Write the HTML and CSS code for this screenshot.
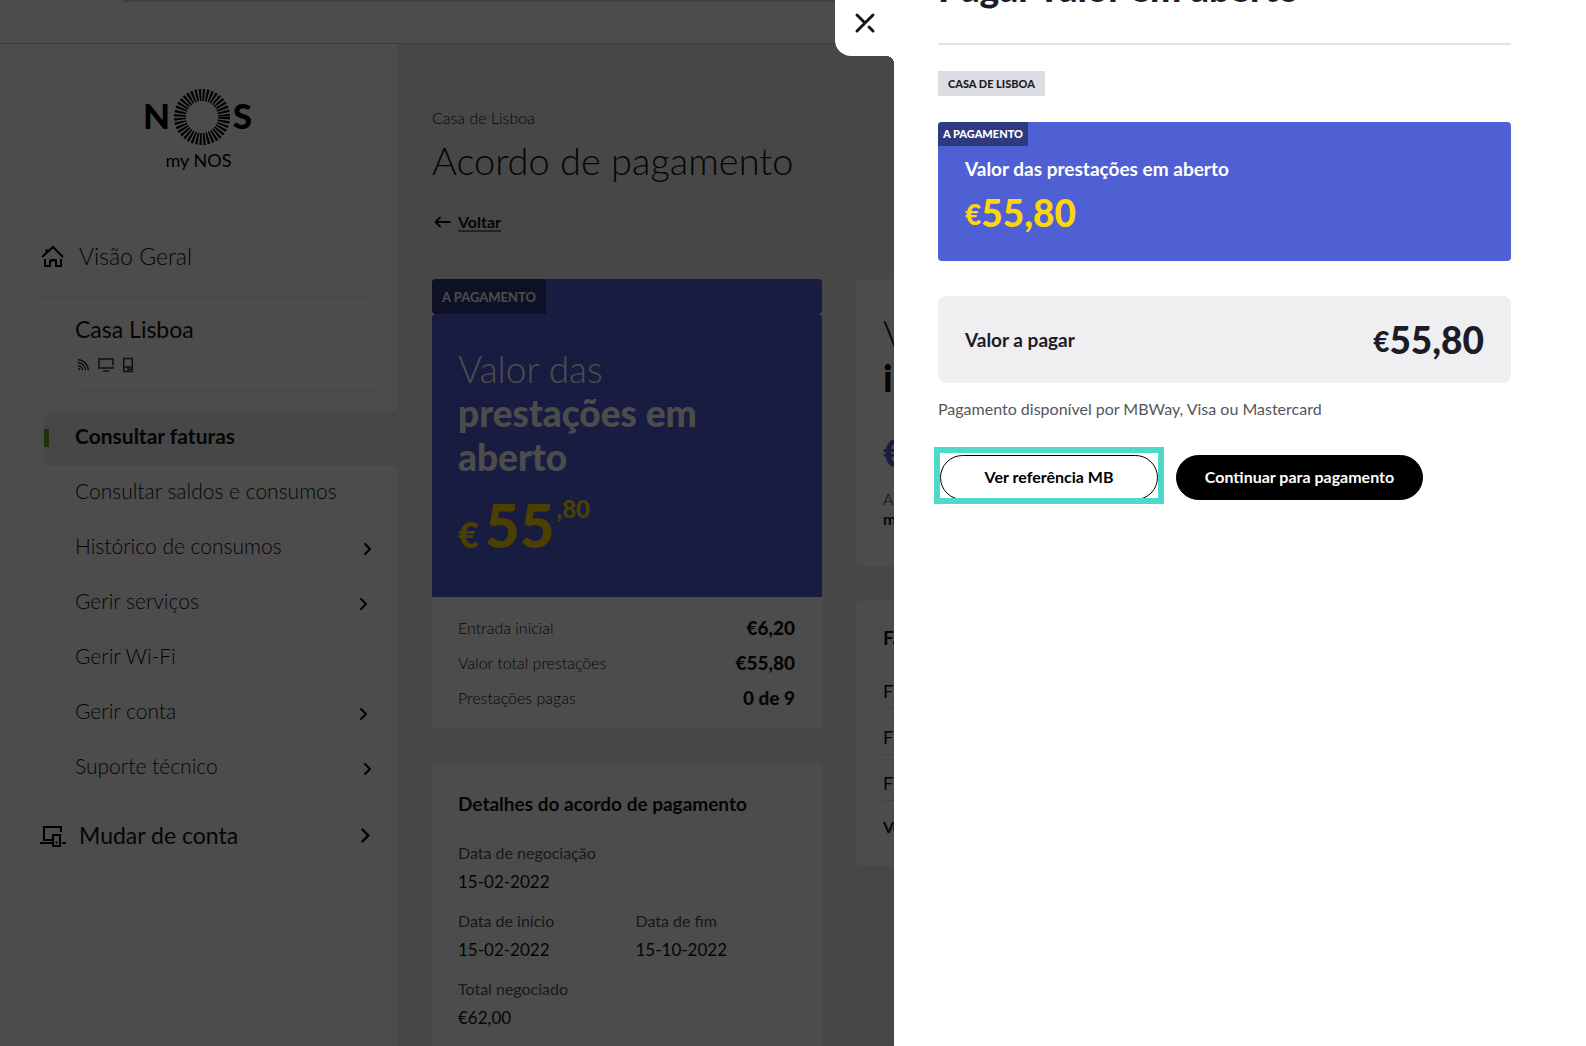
FILE: index.html
```html
<!DOCTYPE html>
<html lang="pt">
<head>
  <meta charset="UTF-8">
  <meta name="viewport" content="width=device-width, initial-scale=1">
  <title>my NOS - Acordo de pagamento</title>
  <link rel="stylesheet" href="styles.css">
</head>
<body>

<svg class="sprite">
  <symbol id="chevron" viewBox="0 0 10 14">
    <path d="M2 2l5 5-5 5" fill="none" stroke="currentColor" stroke-width="2" stroke-linecap="round" stroke-linejoin="round"/>
  </symbol>
</svg>

<header class="topbar">
  <div class="topbar-search"></div>
</header>

<div class="layout">
  <aside class="sidebar">
    <div class="logo">
      <svg width="108" height="58" viewBox="0 0 108 58">
        <text x="-2" y="41" class="logo-letter">N</text>
        <circle cx="57" cy="29" r="22" fill="none" stroke="#000" stroke-width="12" stroke-dasharray="2 1.456"/>
        <text x="107" y="41" class="logo-letter" text-anchor="end">S</text>
      </svg>
      <span>my NOS</span>
    </div>

    <nav>
      <a href="#" class="nav-main overview">
        <svg width="24" height="24" viewBox="0 0 24 24" fill="none" stroke="#000" stroke-width="2">
          <path d="M2 13L13 3l10 10M6.500 9V5"/>
          <path d="M5 15v7h5v-5h1.500v-1h4v1H16v5h5v-7"/>
        </svg>
        <span>Visão Geral</span>
      </a>

      <div class="account">
        <div class="account-name">Casa Lisboa</div>
        <div class="account-icons">
          <svg width="16" height="16" viewBox="0 0 16 16" fill="none" stroke="currentColor" stroke-width="1.500">
            <path d="M3 2.800a10.500 10.500 0 0 1 10.200 10.400M3 5.800a7.500 7.500 0 0 1 7.400 7.400M3 8.700a4.500 4.500 0 0 1 4.500 4.500M3 11.400a2 2 0 0 1 1.800 1.800"/>
          </svg>
          <svg width="16" height="16" viewBox="0 0 16 16" fill="none" stroke="currentColor" stroke-width="1.500">
            <path d="M15 8V2H1v9h14V9.500M5 14h6"/>
          </svg>
          <svg width="16" height="16" viewBox="0 0 16 16" fill="none" stroke="currentColor" stroke-width="1.500">
            <path d="M2.700 1.500h8.600v13H2.700zM2.700 10h8.600M7 10v4.500M7 12.300h4"/>
          </svg>
        </div>
      </div>

      <ul class="menu">
        <li class="active"><a href="#"><span>Consultar faturas</span></a></li>
        <li><a href="#"><span>Consultar saldos e consumos</span></a></li>
        <li><a href="#"><span>Histórico de consumos</span><svg class="chevron"><use href="#chevron"/></svg></a></li>
        <li class="inset"><a href="#"><span>Gerir serviços</span><svg class="chevron"><use href="#chevron"/></svg></a></li>
        <li><a href="#"><span>Gerir Wi-Fi</span></a></li>
        <li class="inset"><a href="#"><span>Gerir conta</span><svg class="chevron"><use href="#chevron"/></svg></a></li>
        <li><a href="#"><span>Suporte técnico</span><svg class="chevron"><use href="#chevron"/></svg></a></li>
      </ul>

      <a href="#" class="nav-main switch">
        <svg class="devices" width="26" height="24" viewBox="0 0 26 24" fill="none" stroke="#000" stroke-width="2">
          <path d="M21 9V4H4v13h8M0 20h12M22 20h4"/>
          <path d="M13 12h7v11h-7z"/>
          <path d="M15.500 19.500h2"/>
        </svg>
        <span>Mudar de conta</span>
        <svg class="chevron large"><use href="#chevron"/></svg>
      </a>
    </nav>
  </aside>

  <main class="content">
    <div class="breadcrumb">Casa de Lisboa</div>
    <h1>Acordo de pagamento</h1>
    <a href="#" class="back">
      <svg width="20" height="16" viewBox="0 0 20 16" fill="none" stroke="currentColor" stroke-width="2" stroke-linecap="round" stroke-linejoin="round">
        <path d="M18 8H4M8 3.500L3.500 8 8 12.500"/>
      </svg>
      <span>Voltar</span>
    </a>

    <div class="columns">
      <div class="column">
        <section class="card">
          <div class="card-strip"><span class="card-tag">A PAGAMENTO</span></div>
          <div class="card-amount">
            <h2>Valor das<br><strong>prestações em aberto</strong></h2>
            <div class="big-price"><span class="currency">€</span><span class="units">55</span><span class="cents">,80</span></div>
          </div>
          <dl class="summary">
            <div><dt>Entrada inicial</dt><dd>€6,20</dd></div>
            <div><dt>Valor total prestações</dt><dd>€55,80</dd></div>
            <div><dt>Prestações pagas</dt><dd>0 de 9</dd></div>
          </dl>
        </section>

        <section class="card details">
          <h3>Detalhes do acordo de pagamento</h3>
          <dl>
            <div class="full"><dt>Data de negociação</dt><dd>15-02-2022</dd></div>
            <div><dt>Data de início</dt><dd>15-02-2022</dd></div>
            <div><dt>Data de fim</dt><dd>15-10-2022</dd></div>
            <div class="full"><dt>Total negociado</dt><dd>€62,00</dd></div>
          </dl>
        </section>
      </div>

      <div class="column">
        <section class="card initial">
          <h2>Valor<br><strong>inicial</strong></h2>
          <div class="initial-price">€6,20</div>
          <p>A pagar por<br><strong>multibanco</strong></p>
        </section>

        <section class="card invoices">
          <h3>Faturas</h3>
          <ul>
            <li>FT</li>
            <li>FT</li>
            <li>FT</li>
          </ul>
          <a href="#">Ver todas</a>
        </section>
      </div>
    </div>
  </main>
</div>

<div class="overlay"></div>

<div class="drawer" role="dialog" aria-labelledby="drawer-title">
  <button class="close" aria-label="Fechar">
    <svg width="22" height="22" viewBox="0 0 22 22" fill="none" stroke="#15151e" stroke-width="3" stroke-linecap="round">
      <path d="M19 3L3 19M3 3l8 8M15 15l4 4"/>
    </svg>
  </button>

  <h2 id="drawer-title">Pagar valor em aberto</h2>
  <div class="place-tag">CASA DE LISBOA</div>

  <section class="open-value">
    <span class="open-tag">A PAGAMENTO</span>
    <div class="open-body">
      <h3>Valor das prestações em aberto</h3>
      <div class="price"><span>€</span>55,80</div>
    </div>
  </section>

  <section class="to-pay">
    <h3>Valor a pagar</h3>
    <div class="price"><span>€</span>55,80</div>
  </section>

  <p class="note">Pagamento disponível por MBWay, Visa ou Mastercard</p>

  <div class="actions">
    <div class="highlight"><button class="btn btn-outline">Ver referência MB</button></div>
    <button class="btn btn-dark">Continuar para pagamento</button>
  </div>
</div>

</body>
</html>
```
FILE: styles.css
```css
* { box-sizing: border-box; }
body { margin: 0; height: 100vh; overflow: hidden; font-family: Lato, "Liberation Sans", sans-serif; font-size: 16px; line-height: 24px; color: #111; background: #efeff0; }
h1, h2, h3, p, ul, dl, dd { margin: 0; padding: 0; }
ul { list-style: none; }
a { color: inherit; text-decoration: none; }
button { font-family: inherit; cursor: pointer; }
svg { flex: none; }
.sprite { display: none; }

/* top bar */
.topbar { height: 44px; padding-left: 122px; background: #fff; border-bottom: 1px solid #ccc; }
.topbar-search { height: 2px; background: #d8d8d8; border-radius: 0 0 0 8px; }

.layout { display: flex; }

/* sidebar */
.sidebar { flex: none; width: 397px; height: calc(100vh - 44px); padding-top: 44px; background: #fff; }
.logo { display: flex; flex-direction: column; align-items: center; margin-bottom: 68px; font-size: 18px; color: #000; }
.logo span { margin-top: 2px; }
.logo-letter { font-size: 35px; font-weight: 900; }
.nav-main { display: flex; align-items: center; font-size: 23px; line-height: 32px; }
.overview { margin: 0 25px 0 40px; padding-bottom: 25px; border-bottom: 1px solid #ececec; font-weight: 300; }
.overview span { margin-left: 15px; }
.account { margin: 15px 22px 19px 75px; padding-bottom: 18px; border-bottom: 1px solid #ececec; }
.account-name { font-size: 23px; line-height: 32px; }
.account-icons { display: flex; gap: 7px; margin-top: 12px; color: #333; }
.menu { font-size: 21px; font-weight: 300; }
.menu li { position: relative; margin-left: 44px; padding-right: 24px; }
.menu li.inset { padding-right: 28px; }
.menu a { display: flex; align-items: center; justify-content: space-between; height: 55px; padding-left: 31px; }
.menu a span { padding-bottom: 5px; }
.menu .active { background: #efeff0; border-radius: 8px 0 0 8px; font-weight: 700; }
.menu .active::before { content: ""; position: absolute; left: 0; top: 18px; width: 5px; height: 18px; background: #6ea514; }
.chevron { width: 10px; height: 14px; color: #000; }
.chevron.large { width: 12px; height: 17px; margin-left: auto; }
.switch { margin: 0 17px 0 44px; padding: 22px 8px 0 0; border-top: 1px solid #ececec; }
.switch .devices { margin-left: -4px; }
.switch span { margin-left: 13px; }

/* content */
.content { flex: 1; padding: 62px 35px 0; }
.breadcrumb { font-weight: 300; }
h1 { margin-top: 8px; font-size: 38px; line-height: 44px; font-weight: 300; }
.back { display: flex; align-items: center; gap: 6px; width: max-content; margin-top: 28px; font-weight: 700; }
.back span { text-decoration: underline; text-decoration-thickness: 2px; text-underline-offset: 2px; text-decoration-color: #777; }
.columns { display: grid; grid-template-columns: 390px 1fr; align-items: start; gap: 34px; margin-top: 45px; }
.card { background: #fff; border-radius: 4px; }
.card h2 { font-size: 37px; line-height: 44px; font-weight: 300; }
.card h2 strong { font-weight: 900; }
.card h3 { font-size: 19px; font-weight: 700; }
.card-strip { display: flex; height: 35px; background: #505fd5; border-radius: 4px; }
.card-tag { padding: 0 10px; background: #2f377f; border-radius: 4px 0 0 4px; color: #fff; font-size: 13px; line-height: 36px; font-weight: 700; }
.card-amount { padding: 33px 26px 40px; background: #505fd5; border-radius: 4px 4px 0 0; color: #fff; }
.big-price { display: flex; align-items: baseline; height: 64px; margin-top: 14px; line-height: 64px; font-weight: 900; color: #fed700; }
.big-price .currency { margin-right: 6px; font-size: 36px; }
.big-price .units { font-size: 60px; }
.big-price .cents { align-self: flex-start; margin-left: 2px; font-size: 24px; line-height: 32px; }
.summary { padding: 13px 27px 14px 26px; }
.summary div { display: flex; justify-content: space-between; line-height: 35px; }
.summary dt { font-weight: 300; }
.summary dd { font-size: 19px; font-weight: 900; }

.details { margin-top: 35px; padding: 28px 27px 27px 26px; }
.details dl { display: grid; grid-template-columns: 1fr 1fr; gap: 13px 18px; margin-top: 25px; }
.details .full { grid-column: 1 / 3; }
.details dt { color: #555; }
.details dd { margin-top: 3px; font-size: 17px; line-height: 28px; }

.initial { padding: 33px 27px 37px; }
.initial-price { margin-top: 31px; font-size: 37px; line-height: 44px; font-weight: 900; color: #505fd5; }
.initial p { margin-top: 14px; line-height: 20px; font-weight: 300; }
.initial p strong { font-weight: 700; }
.invoices { margin-top: 35px; padding: 25px 27px 27px; }
.invoices ul { margin: 13px 0 14px; font-size: 18px; }
.invoices li { padding: 16px 0 5px; border-bottom: 1px solid #ddd; }
.invoices a { display: block; font-weight: 700; }

/* drawer */
.overlay { position: fixed; inset: 0; background: rgba(0, 0, 0, 0.7); }
.drawer { position: fixed; top: 0; right: 0; bottom: 0; width: 692px; padding: 0 75px 0 44px; background: #fff; color: #1c1c26; }
.close { position: absolute; top: 0; right: 100%; display: flex; width: 59px; height: 56px; padding: 12px 19px; background: #fff; border: 0; border-radius: 0 0 0 16px; }
.close::after { content: ""; position: absolute; top: 100%; right: 0; width: 8px; height: 8px; background: radial-gradient(circle at 0 100%, transparent 8px, #fff 8px); }
.drawer > h2 { margin-top: -34px; padding-bottom: 33px; border-bottom: 2px solid #e4e4e8; font-size: 37px; line-height: 44px; font-weight: 900; }
.drawer h3 { font-size: 19px; font-weight: 700; }
.place-tag { display: inline-block; margin-top: 26px; padding: 0 10px; background: #dcdde2; font-size: 11px; line-height: 25px; font-weight: 900; vertical-align: top; }
.open-value { margin-top: 26px; background: #4f5fd4; border-radius: 4px; color: #fff; overflow: hidden; }
.open-tag { display: block; width: max-content; padding: 0 5px; background: #2f3980; font-size: 11px; font-weight: 900; }
.open-body { padding: 11px 27px 26px; }
.open-body .price { margin-top: 10px; color: #fdd60a; }
.price { font-size: 37px; line-height: 44px; font-weight: 900; }
.price span { font-size: 28px; vertical-align: 2px; line-height: 28px; }
.to-pay { display: flex; align-items: center; justify-content: space-between; height: 87px; margin-top: 35px; padding: 0 27px; background: #efeff2; border-radius: 8px; }
.note { margin-top: 14px; color: #55555c; }
.actions { display: flex; gap: 18px; margin: 34px 0 0 2px; }
.btn { height: 45px; padding-bottom: 4px; border: 1px solid #000; border-radius: 23px; font-size: 16px; font-weight: 700; }
.btn-outline { width: 218px; background: #fff; color: #000; }
.btn-dark { width: 247px; background: #000; color: #fff; }
.highlight { position: relative; }
.highlight::after { content: ""; position: absolute; inset: -8px -6px -4px; border: 6px solid #4edac8; pointer-events: none; }
```
